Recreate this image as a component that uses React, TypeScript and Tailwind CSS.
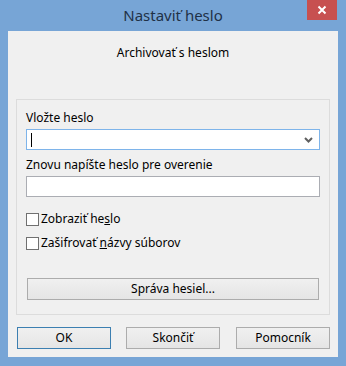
import React from "react";

const font = { fontFamily: '"Segoe UI", "Noto Sans", "Open Sans", sans-serif' };

const WinButton = ({
  children,
  isDefault = false,
  className = "",
}: {
  children: React.ReactNode;
  isDefault?: boolean;
  className?: string;
}) => (
  <button
    className={`h-[22px] flex items-center justify-center text-[12px] text-black bg-gradient-to-b from-[#f0f0f0] to-[#e5e5e5] border ${
      isDefault ? "border-[#3c7fb1]" : "border-[#acacac]"
    } ${className}`}
  >
    {children}
  </button>
);

const Checkbox = ({ children }: { children: React.ReactNode }) => (
  <label className="flex items-center h-4 gap-[2px] text-[12px] text-black">
    <span className="w-[13px] h-[13px] border border-[#707070] bg-white shrink-0" />
    <span>{children}</span>
  </label>
);

export default function App() {
  return (
    <div
      className="w-[346px] h-[366px] bg-[#77a5d6] flex flex-col px-2 pb-[9px]"
      style={font}
    >
      {/* title bar */}
      <div className="h-[31px] flex items-start shrink-0">
        <div className="w-[30px]" />
        <div className="flex-1 text-center text-[15px] leading-[31px] text-[#1f3147] pl-[1px]">
          Nastaviť heslo
        </div>
        <button className="w-[30px] h-[20px] bg-[#c75050] flex items-center justify-center mr-[1px]">
          <svg width="10" height="10" viewBox="0 0 10 10">
            <path d="M1.5 1.5 L8.5 8.5 M8.5 1.5 L1.5 8.5" stroke="#fff" strokeWidth="2" />
          </svg>
        </button>
      </div>

      {/* client area */}
      <div className="flex-1 bg-[#f0f0f0] flex flex-col px-2">
        <div className="text-center text-[12px] leading-4 text-black mt-[14px]">
          Archivovať s heslom
        </div>

        <div className="mt-[38px] border border-[#dcdcdc] flex flex-col px-[9px] pt-[10px] pb-[14px]">
          <div className="text-[12px] leading-4 text-black">Vložte heslo</div>
          <div className="mt-[3px] h-[21px] border border-[#7eb4ea] bg-white flex items-center">
            <span className="ml-[4px] w-px h-[14px] bg-black" />
            <div className="flex-1" />
            <svg width="9" height="6" viewBox="0 0 9 6" className="mr-[6px]">
              <path d="M1 1 L4.5 4.5 L8 1" stroke="#606060" strokeWidth="2" fill="none" />
            </svg>
          </div>

          <div className="mt-[7px] text-[12px] leading-4 text-black">
            Znovu napíšte heslo pre overenie
          </div>
          <div className="mt-[3px] h-[21px] border border-[#abadb3] bg-white" />

          <div className="mt-[14px] flex flex-col gap-2">
            <Checkbox>
              Zobraziť he<span className="underline">s</span>lo
            </Checkbox>
            <Checkbox>
              Zašifrovať <span className="underline">n</span>ázvy súborov
            </Checkbox>
          </div>

          <WinButton className="mt-[27px] mx-[1px]">Správa hesiel...</WinButton>
        </div>

        <div className="mt-3 flex pl-[1px] gap-[15px]">
          <WinButton isDefault className="w-[95px]">
            OK
          </WinButton>
          <WinButton className="w-[95px]">Skončiť</WinButton>
          <WinButton className="w-[95px] ml-[1px]">Pomocník</WinButton>
        </div>
      </div>
    </div>
  );
}
